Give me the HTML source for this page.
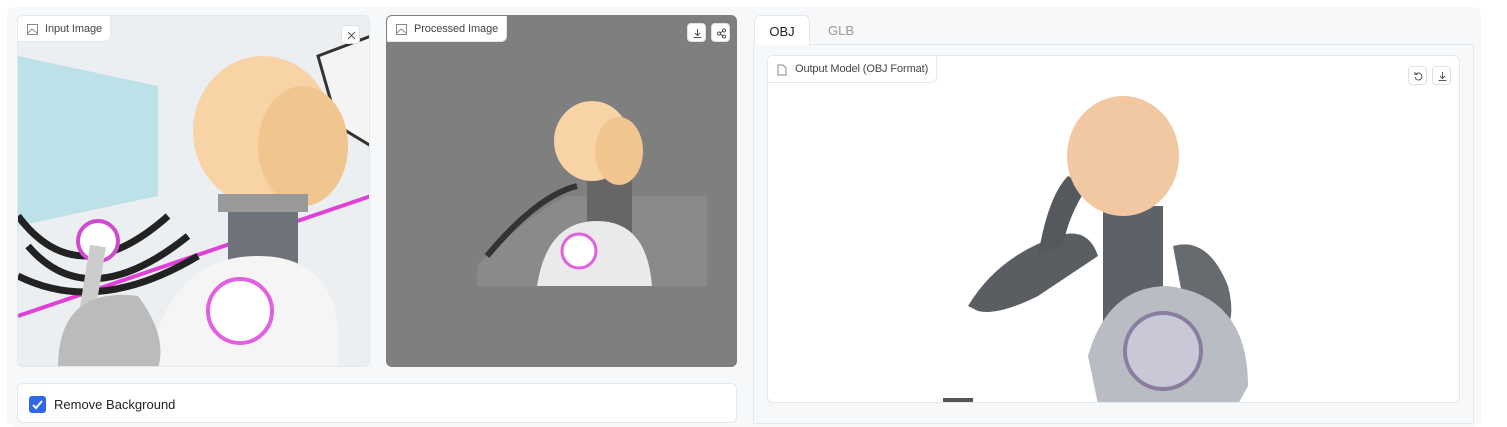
<!DOCTYPE html>
<html><head><meta charset="utf-8"><style>
*{box-sizing:border-box;margin:0;padding:0}
body{width:1507px;height:413px;background:#fff;font-family:"Liberation Sans",sans-serif;position:relative;overflow:hidden}
.abs{position:absolute}
.outer{left:7px;top:7px;width:1474px;height:420px;background:#f7f8fa;border-radius:8px}
.box{border:1px solid #e4e7eb;border-radius:6px;overflow:hidden}
.label{position:absolute;left:0;top:0;background:#fff;border:1px solid #e4e7eb;border-top:none;border-left:none;border-radius:0 0 6px 0;height:26px;font-size:11px;color:#444;padding:7px 8px 0 27px;letter-spacing:-0.1px}
.label svg{position:absolute;left:9px;top:8px}
.btn{position:absolute;width:19px;height:19px;background:#fff;border:1px solid #dde1e6;border-radius:4px}
.btn svg{position:absolute;left:4px;top:4px}
</style></head><body>
<div class="abs outer"></div>

<div class="abs box" style="left:17px;top:15px;width:353px;height:352px;background:#e9ecee">
<svg width="353" height="352" style="position:absolute;left:0;top:0">
<rect width="353" height="352" fill="#eceff1"/>
<polygon points="0,40 140,70 140,180 0,210" fill="#a8dbe6" opacity=".7"/>
<polygon points="300,40 353,20 353,130 320,110" fill="#f4f4f4" stroke="#333" stroke-width="3"/>
<line x1="0" y1="300" x2="353" y2="180" stroke="#e040d8" stroke-width="4"/>
<path d="M0,200 Q60,280 150,200 M10,230 Q70,300 170,220 M0,260 Q80,300 180,240" stroke="#222" stroke-width="7" fill="none"/>
<rect x="210" y="170" width="70" height="120" fill="#6d7378"/>
<ellipse cx="245" cy="115" rx="70" ry="75" fill="#f8d3a6"/>
<ellipse cx="285" cy="130" rx="45" ry="60" fill="#f1c590"/>
<rect x="200" y="178" width="90" height="18" fill="#999"/>
<path d="M130,352 Q150,240 240,240 Q330,240 320,352Z" fill="#f5f5f5"/>
<circle cx="222" cy="295" r="32" fill="#fff" stroke="#e060e0" stroke-width="4"/>
<circle cx="80" cy="225" r="20" fill="#fff" stroke="#d04ad0" stroke-width="4"/>
<path d="M60,352 L80,230" stroke="#ccc" stroke-width="16"/>
<path d="M40,352 Q40,270 120,280 Q150,320 140,352Z" fill="#bbb"/>
</svg>
<div class="label"><svg width="11" height="11" viewBox="0 0 11 11"><rect x=".5" y=".5" width="10" height="10" fill="none" stroke="#888"/><path d="M1,9 L5,5 L10,9" stroke="#888" fill="none"/></svg>Input Image</div>
<div class="btn" style="left:323px;top:9px"><svg width="11" height="11"><path d="M2,2L9,9M9,2L2,9" stroke="#555" stroke-width="1"/></svg></div>
</div>

<div class="abs box" style="left:386px;top:15px;width:351px;height:352px;background:#7f7f7f;border-color:#7f7f7f">
<svg width="351" height="352" style="position:absolute;left:0;top:0">
<path d="M90,250 Q140,200 180,180 L320,180 L320,270 L90,270Z" fill="#8a8a8a"/>
<path d="M100,240 Q150,180 190,170" stroke="#333" stroke-width="6" fill="none"/>
<rect x="200" y="140" width="45" height="80" fill="#666"/>
<ellipse cx="205" cy="125" rx="38" ry="40" fill="#f8d3a6"/>
<ellipse cx="232" cy="135" rx="24" ry="34" fill="#f1c590"/>
<path d="M150,270 Q160,205 210,205 Q260,205 265,270Z" fill="#eaeaea"/>
<circle cx="192" cy="235" r="17" fill="#fff" stroke="#e060e0" stroke-width="3"/>
</svg>
<div class="label"><svg width="11" height="11" viewBox="0 0 11 11"><rect x=".5" y=".5" width="10" height="10" fill="none" stroke="#888"/><path d="M1,9 L5,5 L10,9" stroke="#888" fill="none"/></svg>Processed Image</div>
<div class="btn" style="left:300px;top:7px"><svg width="11" height="11"><path d="M5.5,1V7M3,5L5.5,7.5L8,5M1.5,9.5H9.5" stroke="#555" fill="none"/></svg></div>
<div class="btn" style="left:324px;top:7px"><svg width="11" height="11"><circle cx="8" cy="2.5" r="1.5" fill="none" stroke="#555"/><circle cx="3" cy="5.5" r="1.5" fill="none" stroke="#555"/><circle cx="8" cy="8.5" r="1.5" fill="none" stroke="#555"/><path d="M4.3,4.8L6.7,3.2M4.3,6.2L6.7,7.8" stroke="#555"/></svg></div>
</div>

<div class="abs" style="left:17px;top:383px;width:720px;height:40px;background:#fff;border:1px solid #e4e7eb;border-radius:6px"></div>
<div class="abs" style="left:29px;top:396px;width:17px;height:17px;background:#2f67e6;border-radius:3px"><svg width="17" height="17"><path d="M4,9L7,12L13,5" stroke="#fff" stroke-width="2" fill="none"/></svg></div>
<div class="abs" style="left:54px;top:397px;font-size:13px;color:#222">Remove Background</div>

<div class="abs" style="left:753px;top:44px;width:721px;height:380px;background:#f7f8fa;border:1px solid #e4e7eb"></div>
<div class="abs" style="left:754px;top:15px;width:56px;height:30px;background:#fff;border:1px solid #e4e7eb;border-bottom:none;border-radius:6px 6px 0 0;font-size:13px;color:#222;text-align:center;padding-top:8px">OBJ</div>
<div class="abs" style="left:828px;top:23px;font-size:13px;color:#999">GLB</div>

<div class="abs box" style="left:767px;top:55px;width:693px;height:348px;background:#fff">
<svg width="693" height="348" style="position:absolute;left:0;top:0">
<path d="M200,250 Q230,200 290,180 Q320,170 330,200 Q300,220 270,240 Q230,260 210,255Z" fill="#5a5e62"/>
<path d="M270,200 Q280,140 300,120 L320,130 Q300,160 295,190Z" fill="#55595d"/>
<rect x="335" y="150" width="60" height="150" fill="#5d6268"/>
<path d="M405,190 Q440,180 460,230 Q470,270 450,280 L420,270Z" fill="#666b70"/>
<ellipse cx="355" cy="100" rx="56" ry="60" fill="#f2c8a2"/>
<path d="M320,300 Q340,230 400,230 Q480,240 480,330 L470,348 L330,348Z" fill="#b9bcc2"/>
<circle cx="395" cy="295" r="38" fill="#c9c8d6" stroke="#8a7ea0" stroke-width="4"/>
<rect x="175" y="342" width="30" height="6" fill="#555"/>
</svg>
<div class="label" style="height:27px"><svg width="10" height="12" viewBox="0 0 10 12"><path d="M1,1H6L9,4V11H1Z" fill="none" stroke="#888"/></svg>Output Model (OBJ Format)</div>
<div class="btn" style="left:640px;top:10px"><svg width="11" height="11"><path d="M3,3A3.5,3.5 0 1 1 2,6M2,1V3.5H4.5" stroke="#555" fill="none"/></svg></div>
<div class="btn" style="left:664px;top:10px"><svg width="11" height="11"><path d="M5.5,1V7M3,5L5.5,7.5L8,5M1.5,9.5H9.5" stroke="#555" fill="none"/></svg></div>
</div>
</body></html>
